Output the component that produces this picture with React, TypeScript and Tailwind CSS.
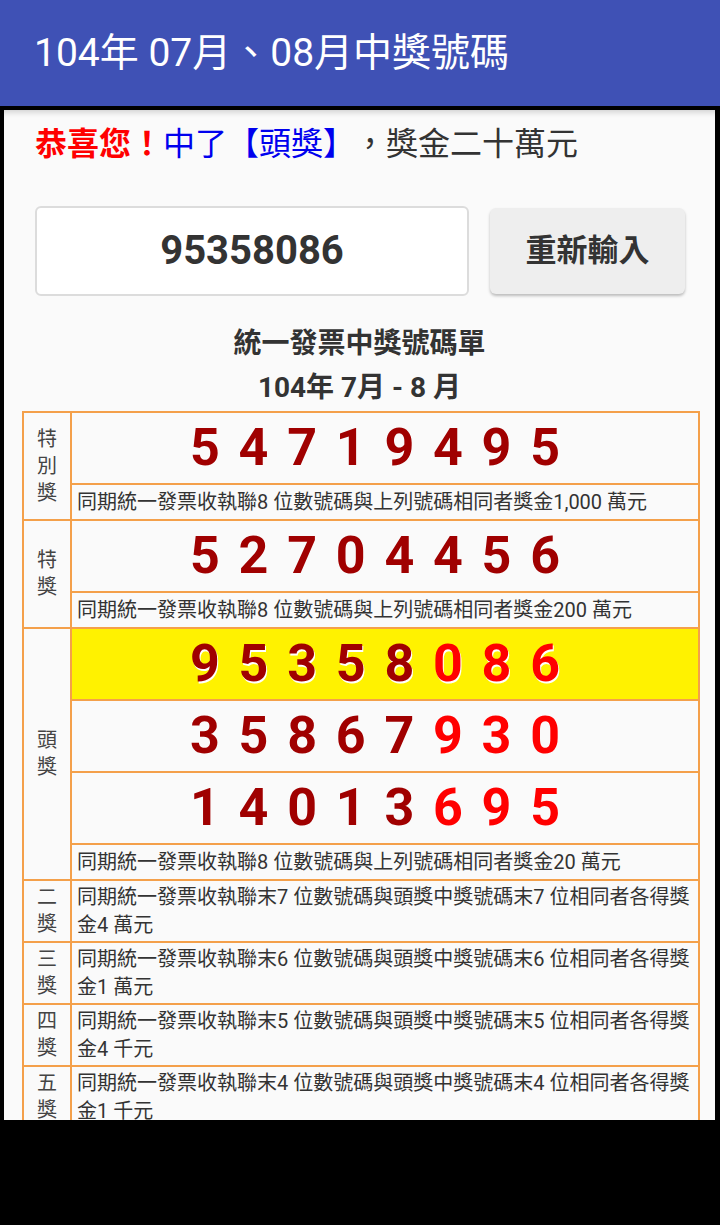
import type { ReactNode } from "react";

// 統一發票對獎結果畫面
const FONT = { fontFamily: "Roboto, 'Noto Sans CJK TC', sans-serif" };

type Digit = { d: string; hit?: boolean };

const toDigits = (num: string, hits = 0): Digit[] =>
  num.split("").map((d, i) => ({ d, hit: i >= num.length - hits }));

function NumberCell({ digits, active }: { digits: Digit[]; active?: boolean }) {
  return (
    <div
      className={`flex h-[72px] items-center justify-center border-b-2 border-[#f4a04a] pr-5 ${
        active ? "bg-[#fff200]" : ""
      }`}
    >
      {digits.map((x, i) => (
        <span
          key={i}
          className={`w-[48.6px] text-center text-[52px] font-bold leading-none ${
            x.hit ? "text-[#ff0000]" : "text-[#a00000]"
          } ${active ? "[text-shadow:1px_2px_0_#ffffff]" : ""}`}
        >
          {x.d}
        </span>
      ))}
    </div>
  );
}

function DescCell({ children, wrap }: { children: ReactNode; wrap?: boolean }) {
  return (
    <div
      className={`pl-[5px] pr-[6px] text-[20px] leading-[28px] text-[#333333] ${
        wrap ? "py-[2px]" : "py-[3px]"
      }`}
    >
      {children}
    </div>
  );
}

function Group({ label, children }: { label: string; children: ReactNode }) {
  return (
    <div className="flex border-b-2 border-[#f4a04a]">
      <div className="flex w-[48px] shrink-0 flex-col items-center justify-center border-r-2 border-[#f4a04a] text-[20px] leading-[27px] text-[#444444]">
        {label.split("").map((c, i) => (
          <span key={i}>{c}</span>
        ))}
      </div>
      <div className="flex min-w-0 flex-1 flex-col">{children}</div>
    </div>
  );
}

const lowerPrizes = [
  { label: "二獎", n: "7", amount: "4 萬元" },
  { label: "三獎", n: "6", amount: "1 萬元" },
  { label: "四獎", n: "5", amount: "4 千元" },
  { label: "五獎", n: "4", amount: "1 千元" },
];

export default function App() {
  return (
    <div className="h-[1225px] w-[720px] overflow-hidden bg-black" style={FONT}>
      <header className="flex h-[106px] items-center bg-[#3f51b5] pl-[34px] text-[39px] text-white">
        104年 07月、08月中獎號碼
      </header>

      <main className="ml-[4px] mt-[4px] h-[1010px] w-[711px] overflow-hidden bg-[#fafafa] shadow-[inset_0_7px_6px_-5px_rgba(0,0,0,0.18)]">
        <p className="mt-[14px] pl-[31px] text-[32px] leading-[40px] text-[#333333]">
          <span className="font-bold text-[#ff0000]">恭喜您！</span>
          <span className="text-[#0000ee]">中了【頭獎】</span>
          <span className="pl-[15px]">，獎金二十萬元</span>
        </p>

        <div className="mt-[42px] flex items-center gap-[21px] pl-[31px]">
          <div className="flex h-[90px] w-[434px] items-center justify-center rounded-md border-2 border-[#dcdcdc] bg-white text-[40px] font-bold text-[#333333]">
            95358086
          </div>
          <button className="h-[86px] w-[195px] rounded-md bg-[#eeeeee] text-[31px] font-bold text-[#333333] shadow-[0_2px_3px_rgba(0,0,0,0.25)]">
            重新輸入
          </button>
        </div>

        <h2 className="mt-[28px] text-center text-[28px] font-bold leading-[40px] text-[#333333]">
          統一發票中獎號碼單
        </h2>
        <p className="mt-[4px] text-center text-[28px] font-bold leading-[40px] text-[#333333]">
          104年 7月 - 8 月
        </p>

        <div className="ml-[18px] mt-[3px] w-[678px] border-x-2 border-t-2 border-[#f4a04a]">
          <Group label="特別獎">
            <NumberCell digits={toDigits("54719495")} />
            <DescCell>同期統一發票收執聯8 位數號碼與上列號碼相同者獎金1,000 萬元</DescCell>
          </Group>
          <Group label="特獎">
            <NumberCell digits={toDigits("52704456")} />
            <DescCell>同期統一發票收執聯8 位數號碼與上列號碼相同者獎金200 萬元</DescCell>
          </Group>
          <Group label="頭獎">
            <NumberCell digits={toDigits("95358086", 3)} active />
            <NumberCell digits={toDigits("35867930", 3)} />
            <NumberCell digits={toDigits("14013695", 3)} />
            <DescCell>同期統一發票收執聯8 位數號碼與上列號碼相同者獎金20 萬元</DescCell>
          </Group>
          {lowerPrizes.map((p) => (
            <Group key={p.label} label={p.label}>
              <DescCell wrap>
                同期統一發票收執聯末{p.n} 位數號碼與頭獎中獎號碼末{p.n} 位相同者各得獎金{p.amount}
              </DescCell>
            </Group>
          ))}
        </div>
      </main>
    </div>
  );
}
